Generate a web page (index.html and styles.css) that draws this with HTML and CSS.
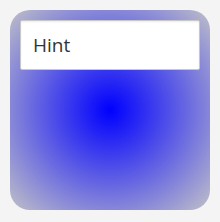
FILE: index.html
```html
<!DOCTYPE html>
<html>
<head>
<meta charset="utf-8">
<link rel="stylesheet" href="styles.css">
</head>
<body>
<div class="card">
  <input class="hint" type="text" placeholder="Hint">
</div>
</body>
</html>
```
FILE: styles.css
```css
html, body {
  margin: 0;
  padding: 0;
  background: #f4f4f4;
}
body {
  padding: 10px;
  width: 200px;
  height: 202px;
}
.card {
  width: 200px;
  height: 200px;
  border-radius: 20px;
  background: radial-gradient(circle farthest-corner at 50% 50%, #0000ff 0%, #c0c0c8 100%);
  padding: 10px;
  box-sizing: border-box;
}
.hint {
  display: block;
  box-sizing: border-box;
  width: 180px;
  height: 50px;
  margin: 0;
  border: 1px solid #c8c8c8;
  border-radius: 2px;
  background: #fff;
  box-shadow: inset 0 1px 2px rgba(0,0,0,0.08);
  padding: 0 12px;
  font-family: "Open Sans", sans-serif;
  font-size: 19px;
  color: #333;
  outline: none;
}
.hint::placeholder {
  color: #333;
  opacity: 1;
}
```
